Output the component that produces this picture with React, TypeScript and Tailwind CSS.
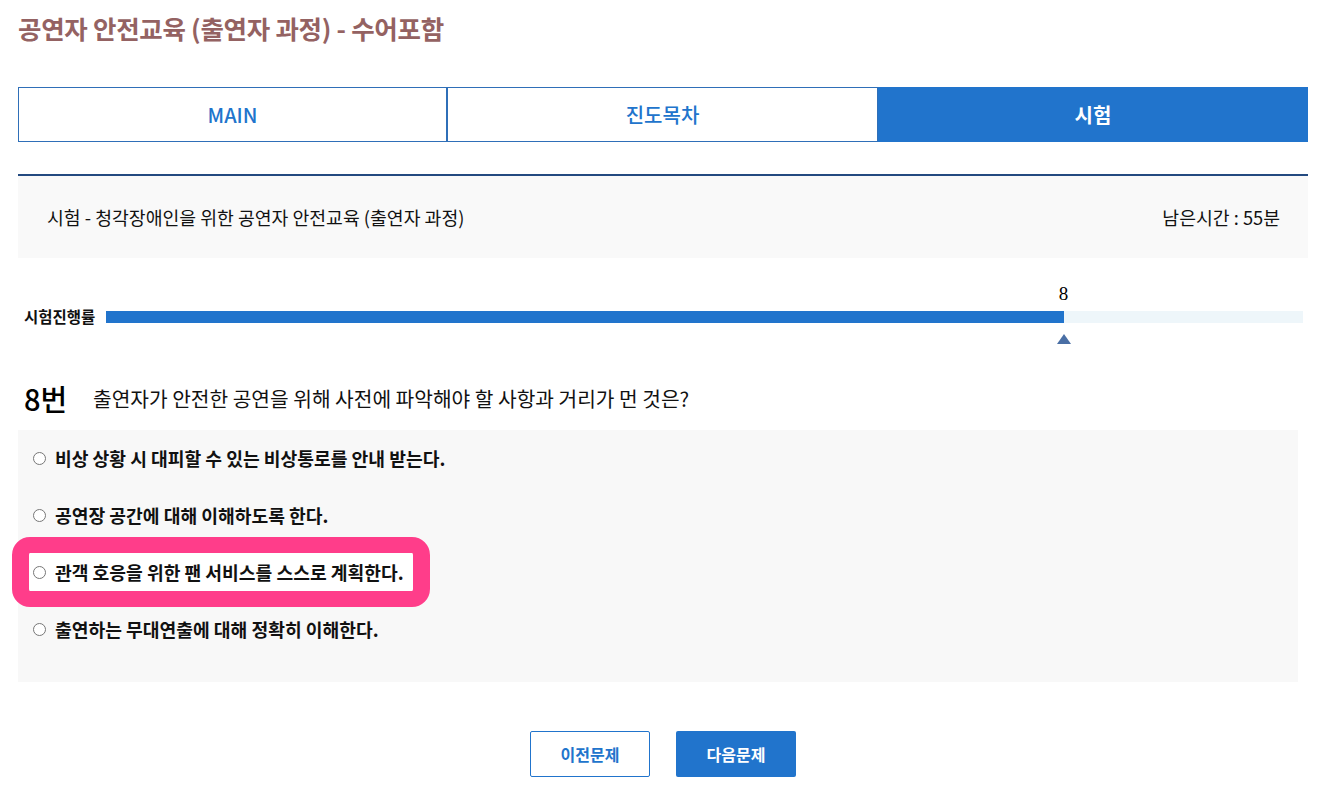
import React from 'react';

const KR = { fontFamily: '"Noto Sans CJK KR", "Noto Sans", sans-serif' };

const tabs = ['MAIN', '진도목차', '시험'];

const options = [
  '비상 상황 시 대피할 수 있는 비상통로를 안내 받는다.',
  '공연장 공간에 대해 이해하도록 한다.',
  '관객 호응을 위한 팬 서비스를 스스로 계획한다.',
  '출연하는 무대연출에 대해 정확히 이해한다.',
];

const current = 8;
const total = 10;

const App = () => {
  const percent = (current / total) * 100;

  return (
    <div className="w-[1320px] h-[792px] bg-white overflow-hidden" style={KR}>
      <div className="ml-[18px] w-[1290px] flex flex-col">
        <h1 className="mt-[10px] h-[36px] leading-[36px] text-[25.5px] font-bold text-[#946262] tracking-[-0.3px]">
          공연자 안전교육 (출연자 과정) - 수어포함
        </h1>

        {/* tabs */}
        <div className="mt-[41px] grid grid-cols-3 h-[55px]">
          {tabs.map((t, i) => (
            <button
              key={t}
              className={
                i === 2
                  ? 'bg-[#2174cc] text-white text-[20px] font-bold'
                  : 'bg-white text-[#2174cc] text-[20px] font-medium border border-[#2f6fb8] ' +
                    (i === 1 ? 'border-l-0' : 'border-r-2')
              }
            >
              {t}
            </button>
          ))}
        </div>

        {/* exam header */}
        <div className="mt-[32px] border-t-2 border-[#234a80] bg-[#f9f9f9] h-[84px] flex items-center justify-between pl-[29px] pr-[28px] pt-[2px]">
          <span className="text-[18.3px] text-[#111]">시험 - 청각장애인을 위한 공연자 안전교육 (출연자 과정)</span>
          <span className="text-[18.3px] text-[#111]">남은시간 : 55분</span>
        </div>

        {/* progress */}
        <div className="mt-[53px] flex items-center h-[12px] pl-[6px] pr-[5px]">
          <span className="w-[82px] text-[15.5px] font-semibold text-[#111] leading-none">시험진행률</span>
          <div className="relative flex-1 h-[12px] bg-[#eef6fa]">
            <div className="h-full bg-[#2174cc]" style={{ width: `${percent}%` }} />
            <div
              className="absolute top-0 -translate-x-1/2 flex flex-col items-center"
              style={{ left: `${percent}%` }}
            >
              <span
                className="absolute -top-[27px] text-[19px] text-black leading-none"
                style={{ fontFamily: '"Liberation Serif", serif' }}
              >
                {current}
              </span>
              <svg width="14" height="10" viewBox="0 0 14 10" className="mt-[23px]">
                <polygon points="7,0 14,10 0,10" fill="#4a6fa5" />
              </svg>
            </div>
          </div>
        </div>

        {/* question */}
        <div className="mt-[55px] flex items-center h-[40px] pl-[6px]">
          <span className="text-[29px] font-medium text-black leading-none w-[69px]">{current}번</span>
          <span className="text-[20.3px] text-[#111]">출연자가 안전한 공연을 위해 사전에 파악해야 할 사항과 거리가 먼 것은?</span>
        </div>

        <div className="mt-[12px] w-[1280px] bg-[#f8f8f8] pb-[24px] flex flex-col">
          {options.map((o, i) => (
            <div key={o} className="relative h-[57px] flex items-center pl-[15px]">
              {i === 2 && (
                <div className="absolute left-[-6px] top-[-7px] w-[418px] h-[70px] bg-white border-[17px] border-y-[16px] border-[#ff3d8a] rounded-[18px]" />
              )}
              <label className="relative flex items-center gap-[9px] cursor-pointer">
                <span className="w-[13px] h-[13px] rounded-full border border-[#777] bg-white" />
                <span className="text-[18.2px] font-semibold text-[#111]">{o}</span>
              </label>
            </div>
          ))}
        </div>

        {/* buttons */}
        <div className="mt-[49px] flex justify-center gap-[26px]">
          <button className="w-[120px] h-[46px] bg-white border border-[#2174cc] rounded-[2px] text-[#2174cc] text-[16px] font-bold">
            이전문제
          </button>
          <button className="w-[120px] h-[46px] bg-[#2174cc] rounded-[2px] text-white text-[16px] font-bold">
            다음문제
          </button>
        </div>
      </div>
    </div>
  );
};

export default App;
